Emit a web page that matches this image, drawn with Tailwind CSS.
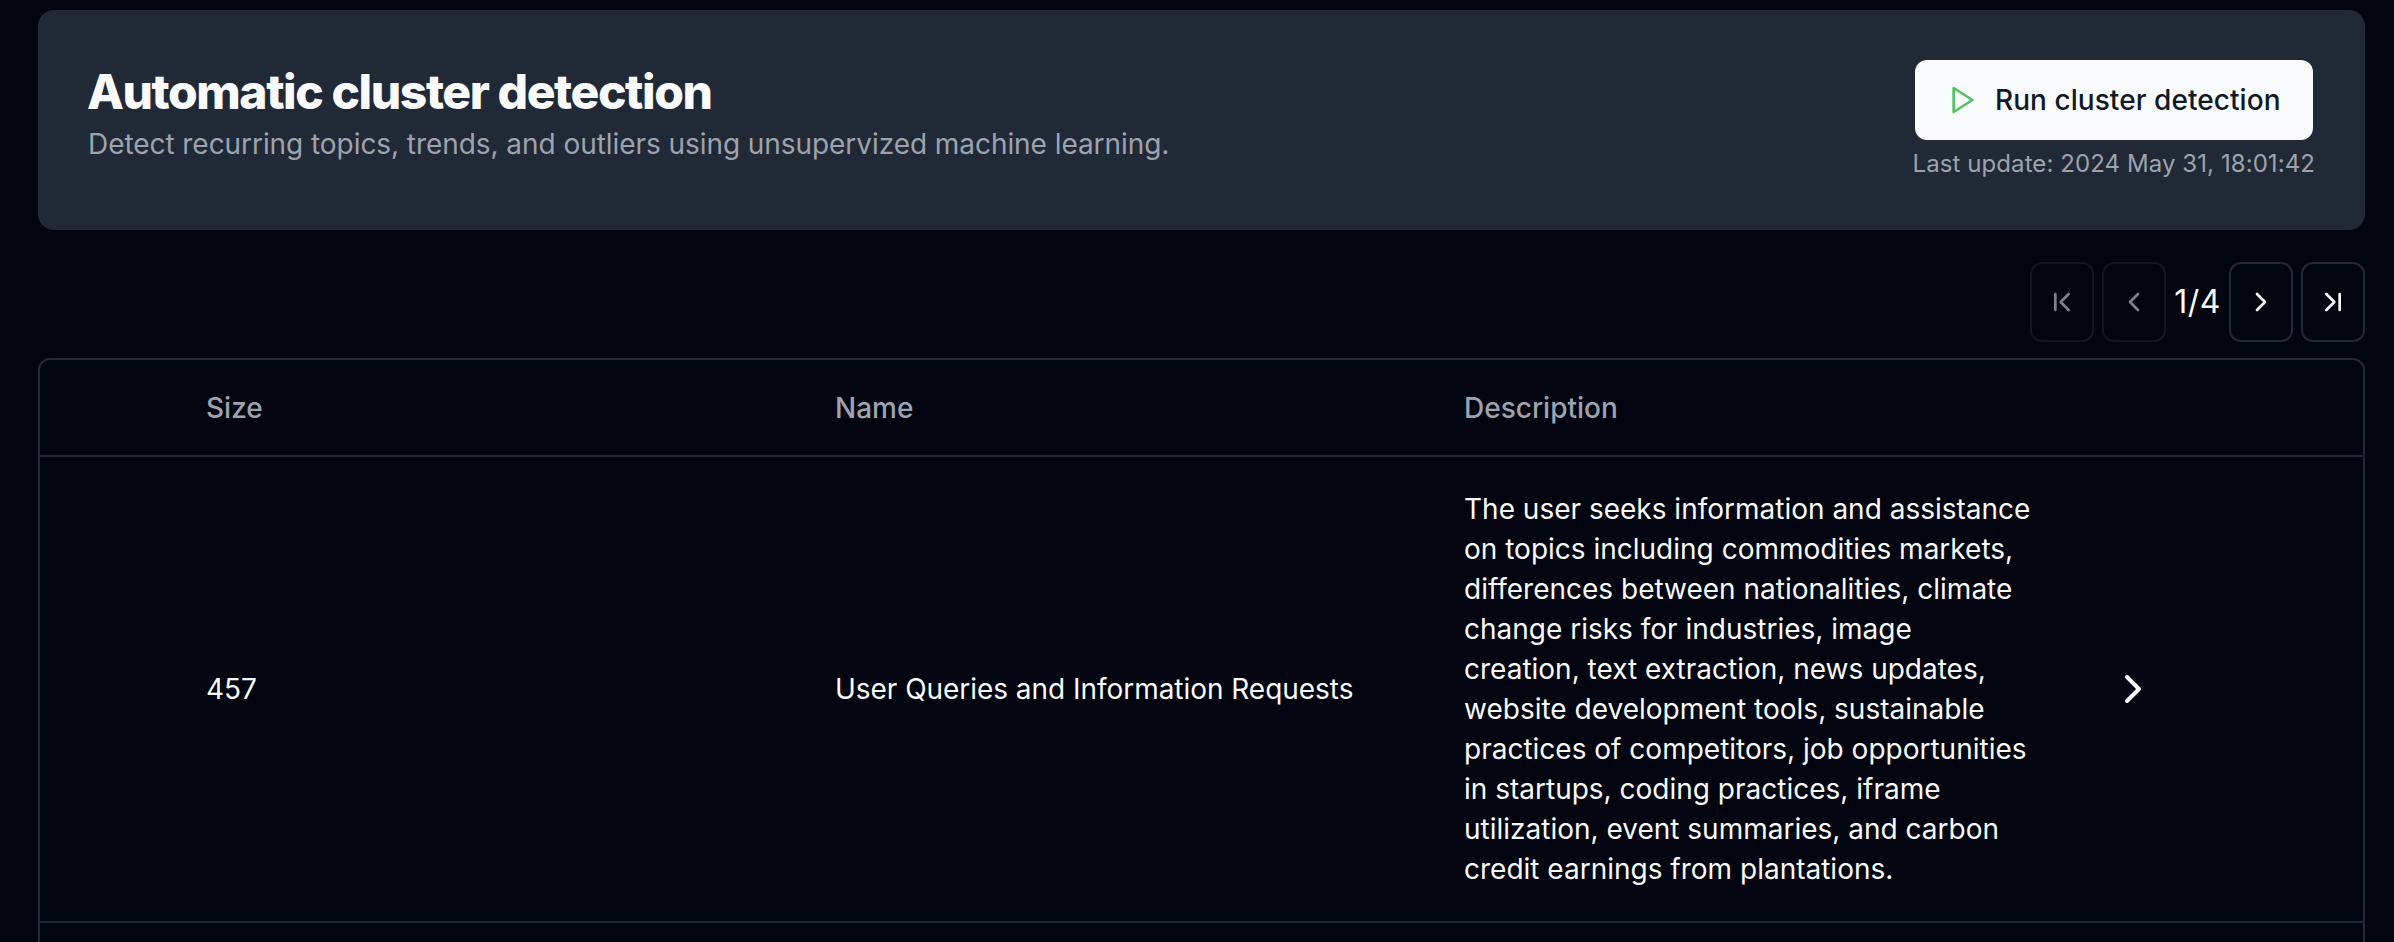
<!DOCTYPE html>
<html lang="en"><head><meta charset="utf-8"><title>Automatic cluster detection</title>
<script src="https://cdn.jsdelivr.net/npm/@tailwindcss/browser@4"></script></head>
<body class="bg-[#020510] text-[#f9fafb] font-['Inter',sans-serif] w-[2394px] h-[942px] overflow-hidden">
<main class="h-[942px] overflow-hidden pl-[38px] pr-[29px] pt-[10px]">
<section class="h-[220px] rounded-[16px] bg-[#212936] flex justify-between pl-[50px] pr-[50px]">
<div class="pt-[50px]"><h1 class="text-[48px] leading-[64px] font-extrabold tracking-[-1.43px] -ml-px">Automatic cluster detection</h1>
<p class="text-[28px] leading-[40px] text-[#9ca3af] tracking-[-0.06px]">Detect recurring topics, trends, and outliers using unsupervized machine learning.</p></div>
<div class="pt-[50px] flex flex-col items-center">
<button class="w-[398px] h-[80px] rounded-[12px] bg-[#f9fafb] text-[#111827] text-[28px] font-medium flex items-center justify-center gap-4 whitespace-nowrap tracking-[0.06px]"><svg class="size-8 text-[#55c064]" viewBox="0 0 24 24" fill="none" stroke="currentColor" stroke-width="2" stroke-linecap="round" stroke-linejoin="round"><path d="m5 3 14 9-14 9V3z"/></svg>Run cluster detection</button>
<p class="text-[24px] leading-[32px] mt-2 text-[#9ca3af] tracking-[0.08px]">Last update: 2024 May 31, 18:01:42</p></div>
</section>
<nav class="mt-8 h-[80px] flex justify-end items-center gap-2 text-[32px]">
<button class="w-16 h-20 border-2 border-[#1f2937] rounded-xl opacity-50 flex items-center justify-center"><svg class="size-8" viewBox="0 0 24 24" fill="none" stroke="currentColor" stroke-width="2" stroke-linecap="round" stroke-linejoin="round"><path d="m17 18-6-6 6-6M7 6v12"/></svg></button>
<button class="w-16 h-20 border-2 border-[#1f2937] rounded-xl opacity-50 flex items-center justify-center"><svg class="size-8" viewBox="0 0 24 24" fill="none" stroke="currentColor" stroke-width="2" stroke-linecap="round" stroke-linejoin="round"><path d="m15 18-6-6 6-6"/></svg></button>
<span class="w-[47px] text-center tracking-[0.4px]">1/4</span>
<button class="w-16 h-20 border-2 border-[#1f2937] rounded-xl flex items-center justify-center"><svg class="size-8" viewBox="0 0 24 24" fill="none" stroke="currentColor" stroke-width="2" stroke-linecap="round" stroke-linejoin="round"><path d="m9 18 6-6-6-6"/></svg></button>
<button class="w-16 h-20 border-2 border-[#1f2937] rounded-xl flex items-center justify-center"><svg class="size-8" viewBox="0 0 24 24" fill="none" stroke="currentColor" stroke-width="2" stroke-linecap="round" stroke-linejoin="round"><path d="m7 18 6-6-6-6M17 6v12"/></svg></button>
</nav>
<section class="mt-4 h-[700px] border-2 border-[#1f2937] rounded-xl text-[28px] leading-[40px]">
<div class="h-[97px] border-b-2 border-[#1f2937] grid grid-cols-[629px_629px_629px_1fr] pl-[166px] items-center text-[#9ca3af] font-medium"><div>Size</div><div>Name</div><div>Description</div></div>
<div class="h-[466px] border-b-2 border-[#1f2937] grid grid-cols-[629px_629px_645px_1fr] pl-[166px] items-center"><div>457</div><div class="tracking-[-0.04px]">User Queries and Information Requests</div><div>The user seeks information and assistance<br>on topics including commodities markets,<br>differences between nationalities, climate<br>change risks for industries, image<br>creation, text extraction, news updates,<br>website development tools, sustainable<br>practices of competitors, job opportunities<br>in startups, coding practices, iframe<br>utilization, event summaries, and carbon<br>credit earnings from plantations.</div><svg class="size-12" viewBox="0 0 24 24" fill="none" stroke="currentColor" stroke-width="2" stroke-linecap="round" stroke-linejoin="round"><path d="m9 18 6-6-6-6"/></svg></div>
</section></main></body></html>
